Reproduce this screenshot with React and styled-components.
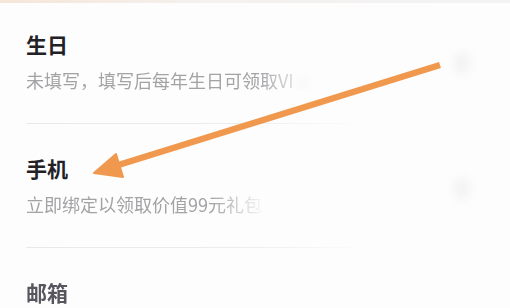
import React from 'react'
import styled, { createGlobalStyle } from 'styled-components'

const Global = createGlobalStyle`
  html, body {
    margin: 0;
    padding: 0;
    background: #fdfdfd;
  }
  body {
    font-family: "Noto Sans CJK SC", "Noto Sans", sans-serif;
  }
`

const Page = styled.div`
  position: relative;
  width: 510px;
  height: 308px;
  overflow: hidden;
  background:
    linear-gradient(90deg, #f6e6d8 0%, #f4f1ee 40%, #f3f3f4 100%) top / 100% 3px no-repeat,
    #fdfdfd;
`

const List = styled.div`
  display: flex;
  flex-direction: column;
  padding: 0 26px;
`

const Row = styled.div`
  display: flex;
  flex-direction: column;
  gap: 15px;
  padding: 33px 0;
  border-bottom: 1px solid transparent;
  border-image: ${p => p.$last ? 'none' : 'linear-gradient(90deg, #e9e9ec 0%, #ececef 45%, rgba(240,240,242,0) 75%) 1'};
`

const Title = styled.div`
  font-size: 21px;
  line-height: 22px;
  font-weight: 700;
  color: ${p => p.$dim ? '#57565e' : '#222226'};
  filter: ${p => p.$dim ? 'blur(0.6px)' : 'none'};
`

const Sub = styled.div`
  font-size: 18px;
  line-height: 20px;
  color: #a3a3a6;
  white-space: nowrap;
  -webkit-mask-image: linear-gradient(90deg, #000 0, #000 ${p => p.$fade}px, transparent ${p => p.$fade + 55}px);
  mask-image: linear-gradient(90deg, #000 0, #000 ${p => p.$fade}px, transparent ${p => p.$fade + 55}px);
`

const Smudge = styled.span`
  display: inline-block;
  width: 80px;
  height: 8px;
  margin-left: 4px;
  vertical-align: middle;
  background: #dcdcde;
  filter: blur(5px);
`

const Overlay = styled.svg`
  position: absolute;
  left: 0;
  top: 0;
  pointer-events: none;
`

const Ghost = styled.div`
  position: absolute;
  right: ${p => p.$r}px;
  top: ${p => p.$t}px;
  width: 16px;
  height: 22px;
  border-radius: 50%;
  background: #f2f2f4;
  filter: blur(5px);
`

export default function App() {
  return (
    <Page>
      <Global />
      <List>
        <Row>
          <Title>生日</Title>
          <Sub $fade={232}>未填写，填写后每年生日可领取VI<Smudge /></Sub>
        </Row>
        <Row>
          <Title>手机</Title>
          <Sub $fade={185}>立即绑定以领取价值99元礼包</Sub>
        </Row>
        <Row $last>
          <Title $dim>邮箱</Title>
        </Row>
      </List>
      <Ghost $r={40} $t={52} />
      <Ghost $r={40} $t={178} />
      <Overlay width="510" height="308" viewBox="0 0 510 308">
        <line x1="440" y1="65" x2="112" y2="167" stroke="#f1984f" strokeWidth="6.5" strokeLinecap="butt" />
        <polygon points="94,173 116,154 123,177" fill="#f1984f" stroke="#f1984f" strokeWidth="2" strokeLinejoin="round" />
      </Overlay>
    </Page>
  )
}
